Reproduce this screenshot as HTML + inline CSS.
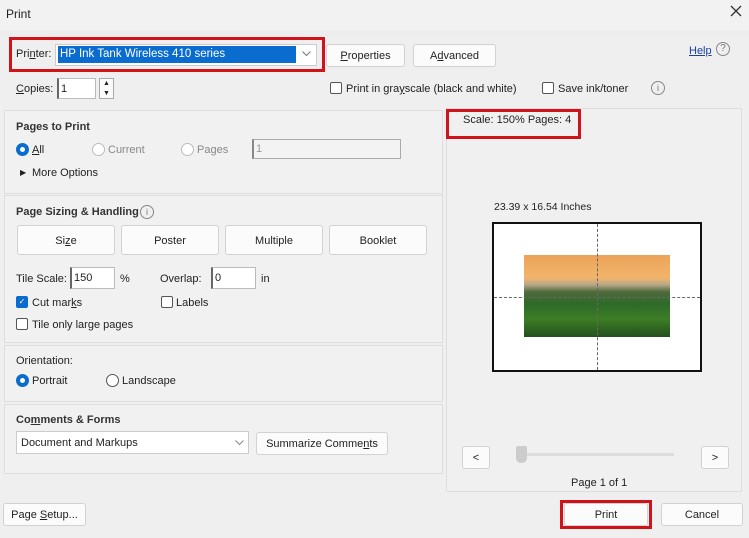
<!DOCTYPE html>
<html><head><style>
*{box-sizing:border-box;margin:0;padding:0}
body{width:749px;height:538px;background:#ededed;font-family:"Liberation Sans",sans-serif;font-size:11px;color:#222;position:relative;overflow:hidden}
.a{position:absolute}
.panel{position:absolute;background:#f1f1f1;border:1px solid #dedede}
.btn{position:absolute;background:#fbfbfb;border:1px solid #d2d2d2;border-radius:3px;text-align:center;font-size:11px;color:#222;display:flex;align-items:center;justify-content:center;padding-top:1px}
.inp{position:absolute;background:#fff;border:1px solid #bbb;border-left:2px solid #666;font-size:11px;padding-left:2px;display:flex;align-items:center}
.cb{position:absolute;width:12px;height:12px;border:1px solid #555;border-radius:2px;background:#fff}
.rd{position:absolute;width:13px;height:13px;border-radius:50%;border:1px solid #555;background:#fff}
.b{font-weight:bold;color:#333}
.red{position:absolute;border:3px solid #d0121b}
</style></head><body>
<div class="a" style="left:0;top:0;width:749px;height:30px;background:#f2f2f2"></div>
<div class="a" style="left:6px;top:7px;font-size:12px">Print</div>
<svg class="a" style="left:730px;top:5px" width="12" height="12"><path d="M1 1L11 11M11 1L1 11" stroke="#333" stroke-width="1.3"/></svg>

<div class="a" style="left:0;top:36px;width:749px;height:502px;background:#efefef"></div>
<div class="a" style="left:16px;top:48px">Pri<u>n</u>ter:</div>
<div class="a" style="left:55px;top:44px;width:262px;height:22px;background:#fff;border:1px solid #ccc"></div>
<div class="a" style="left:58px;top:46px;width:238px;height:17px;background:#0a6ccf;color:#fff;padding:2px 2px;font-size:11.5px">HP Ink Tank Wireless 410 series</div>
<svg class="a" style="left:302px;top:51px" width="9" height="6"><path d="M0.5 0.5L4.5 4.5L8.5 0.5" stroke="#777" fill="none"/></svg>
<div class="red" style="left:9px;top:37px;width:316px;height:35px"></div>
<div class="btn" style="left:326px;top:44px;width:79px;height:23px"><span><u>P</u>roperties</span></div>
<div class="btn" style="left:413px;top:44px;width:83px;height:23px"><span>A<u>d</u>vanced</span></div>
<div class="a" style="left:689px;top:45px;color:#1a3fa0;text-decoration:underline">Help</div>
<div class="a" style="left:716px;top:42px;width:14px;height:14px;border:1px solid #888;border-radius:50%;font-size:10px;text-align:center;line-height:12px;color:#777">?</div>

<div class="a" style="left:16px;top:83px"><u>C</u>opies:</div>
<div class="inp" style="left:57px;top:78px;width:39px;height:21px">1</div>
<div class="a" style="left:99px;top:78px;width:15px;height:21px;border:1px solid #aaa;background:#fafafa;font-size:7px;text-align:center;line-height:10px">▲<br>▼</div>
<div class="cb" style="left:330px;top:82px"></div>
<div class="a" style="left:346px;top:83px">Print in gra<u>y</u>scale (black and white)</div>
<div class="cb" style="left:542px;top:82px"></div>
<div class="a" style="left:558px;top:83px">Save ink/toner</div>
<div class="a" style="left:651px;top:81px;width:14px;height:14px;border:1px solid #888;border-radius:50%;font-size:9px;text-align:center;line-height:12px;color:#777">i</div>

<div class="panel" style="left:4px;top:110px;width:439px;height:84px"></div>
<div class="a b" style="left:16px;top:121px">Pages to Print</div>
<div class="rd" style="left:16px;top:143px;border:4px solid #0a6ccf"></div>
<div class="a" style="left:32px;top:144px"><u>A</u>ll</div>
<div class="rd" style="left:92px;top:143px;border-color:#bbb"></div>
<div class="a" style="left:108px;top:144px;color:#888">Current</div>
<div class="rd" style="left:181px;top:143px;border-color:#bbb"></div>
<div class="a" style="left:197px;top:144px;color:#888">Pages</div>
<div class="a" style="left:252px;top:139px;width:149px;height:20px;border:1px solid #aaa;border-left:2px solid #888;background:#f3f3f3;color:#999;padding:3px 2px">1</div>
<div class="a" style="left:20px;top:168px;font-size:8px">▶</div>
<div class="a" style="left:32px;top:167px">More Options</div>

<div class="panel" style="left:4px;top:195px;width:439px;height:148px"></div>
<div class="a b" style="left:16px;top:206px">Page Sizing &amp; Handling</div>
<div class="a" style="left:140px;top:205px;width:14px;height:14px;border:1px solid #888;border-radius:50%;font-size:9px;text-align:center;line-height:12px;color:#777">i</div>
<div class="btn" style="left:17px;top:225px;width:98px;height:30px"><span>Si<u>z</u>e</span></div>
<div class="btn" style="left:121px;top:225px;width:98px;height:30px">Poster</div>
<div class="btn" style="left:225px;top:225px;width:98px;height:30px">Multiple</div>
<div class="btn" style="left:329px;top:225px;width:98px;height:30px">Booklet</div>
<div class="a" style="left:16px;top:273px">Tile Scale:</div>
<div class="inp" style="left:70px;top:267px;width:45px;height:22px">150</div>
<div class="a" style="left:120px;top:273px">%</div>
<div class="a" style="left:160px;top:273px">Overlap:</div>
<div class="inp" style="left:211px;top:267px;width:45px;height:22px">0</div>
<div class="a" style="left:261px;top:273px">in</div>
<div class="cb" style="left:16px;top:296px;background:#0a6ccf;border-color:#0a6ccf;color:#fff;font-size:8px;text-align:center;line-height:10px">✓</div>
<div class="a" style="left:32px;top:297px">Cut mar<u>k</u>s</div>
<div class="cb" style="left:161px;top:296px"></div>
<div class="a" style="left:176px;top:297px">Labels</div>
<div class="cb" style="left:16px;top:318px"></div>
<div class="a" style="left:32px;top:319px">Tile only large pages</div>

<div class="panel" style="left:4px;top:345px;width:439px;height:57px"></div>
<div class="a" style="left:16px;top:355px">Orientation:</div>
<div class="rd" style="left:16px;top:374px;border:4px solid #0a6ccf"></div>
<div class="a" style="left:32px;top:375px">Portrait</div>
<div class="rd" style="left:106px;top:374px"></div>
<div class="a" style="left:122px;top:375px">Landscape</div>

<div class="panel" style="left:4px;top:404px;width:439px;height:70px"></div>
<div class="a b" style="left:16px;top:414px">Co<u>m</u>ments &amp; Forms</div>
<div class="a" style="left:16px;top:431px;width:233px;height:23px;background:#fff;border:1px solid #ccc;padding:5px 4px">Document and Markups</div>
<svg class="a" style="left:235px;top:440px" width="9" height="6"><path d="M0.5 0.5L4.5 4.5L8.5 0.5" stroke="#888" fill="none"/></svg>
<div class="btn" style="left:256px;top:432px;width:132px;height:23px"><span>Summarize Comme<u>n</u>ts</span></div>

<div class="btn" style="left:3px;top:503px;width:83px;height:23px"><span>Page <u>S</u>etup...</span></div>

<div class="panel" style="left:446px;top:108px;width:296px;height:384px;background:#f0f0f0"></div>
<div class="a" style="left:463px;top:114px">Scale: 150% Pages: 4</div>
<div class="red" style="left:446px;top:109px;width:135px;height:30px"></div>
<div class="a" style="left:494px;top:201px;font-size:10.5px">23.39 x 16.54 Inches</div>
<div class="a" style="left:492px;top:222px;width:210px;height:150px;background:#fff;border:2px solid #111"></div>
<div class="a" style="left:524px;top:255px;width:146px;height:82px;background:linear-gradient(180deg,#eca35a 0%,#f2b46c 28%,#b9a98a 36%,#4f6a3c 45%,#2e6a2a 60%,#3d7d25 78%,#24501d 100%)"></div>
<div class="a" style="left:597px;top:224px;height:146px;border-left:1px dashed #666"></div>
<div class="a" style="left:494px;top:297px;width:206px;border-top:1px dashed #666"></div>
<div class="btn" style="left:462px;top:446px;width:28px;height:23px">&lt;</div>
<div class="a" style="left:518px;top:453px;width:156px;height:3px;background:#ddd"></div>
<div class="a" style="left:516px;top:446px;width:11px;height:17px;background:#ccc;border-radius:2px 2px 5px 5px"></div>
<div class="btn" style="left:701px;top:446px;width:28px;height:23px">&gt;</div>
<div class="a" style="left:571px;top:477px">Page 1 of 1</div>

<div class="btn" style="left:564px;top:503px;width:84px;height:23px">Print</div>
<div class="red" style="left:560px;top:500px;width:92px;height:29px"></div>
<div class="btn" style="left:661px;top:503px;width:82px;height:23px">Cancel</div>
</body></html>
